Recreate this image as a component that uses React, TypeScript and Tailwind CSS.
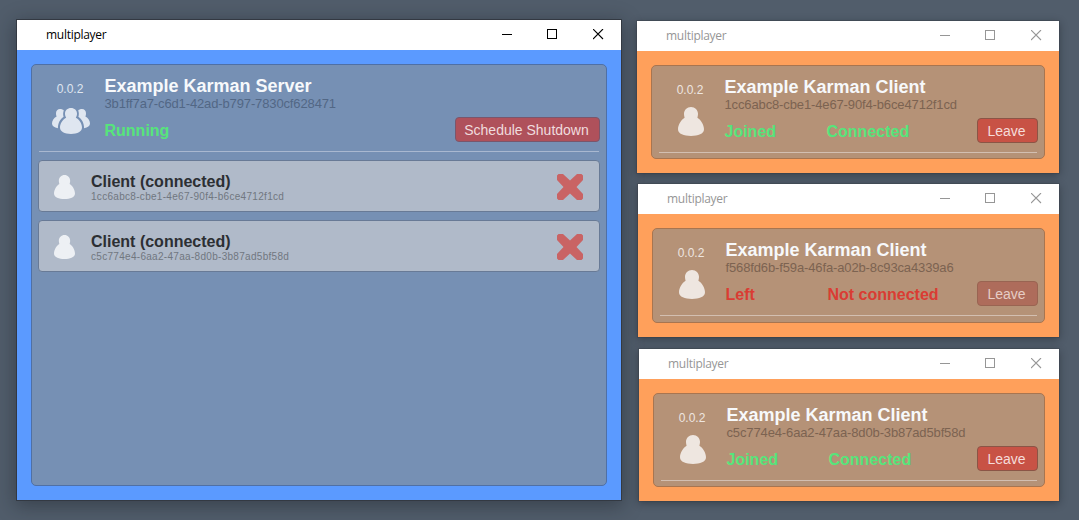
import React from "react";
import clsx from "clsx";

function PersonIcon({ className }: { className: string }) {
  return (
    <svg viewBox="0 0 26 29" className={className} fill="currentColor" preserveAspectRatio="none">
      <path d="M13 0C17 0 20 3 20 6.8C20 8.7 19.6 9.6 19.4 10.8C23 12.8 26 18 26 22.3C26 27 20 29 13 29S0 27 0 22.3C0 18 3 12.8 6.6 10.8C6.4 9.6 6 8.7 6 6.8C6 3 9 0 13 0Z" />
    </svg>
  );
}

function GroupIcon({ className }: { className: string }) {
  return (
    <svg viewBox="0 0 38 26" className={className} fill="currentColor">
      <path d="M19 0C22.5 0 25 2.4 25 5.6C25 7.3 24.6 8.6 23.8 9.8C27.6 11.6 30 15.8 30 19.6C30 23.8 25.5 26 19 26S8 23.8 8 19.6C8 15.8 10.4 11.6 14.2 9.8C13.4 8.6 13 7.3 13 5.6C13 2.4 15.5 0 19 0Z" />
      <path d="M8 1C9.7 1 11 1.5 11.8 2.5C11 4.5 10.9 6.8 11.6 8.8C8.3 11 6 15 5.9 20.3C2.3 19.6 0 18.2 0 15.6C0 12.6 1.8 9.8 4.6 8.4C4.1 7.4 4 6.3 4 5.2C4 2.7 5.7 1 8 1Z" />
      <path d="M30 1C28.3 1 27 1.5 26.2 2.5C27 4.5 27.1 6.8 26.4 8.8C29.7 11 32 15 32.1 20.3C35.7 19.6 38 18.2 38 15.6C38 12.6 36.2 9.8 33.4 8.4C33.9 7.4 34 6.3 34 5.2C34 2.7 32.3 1 30 1Z" />
    </svg>
  );
}

function CrossIcon() {
  return (
    <svg viewBox="0 0 26 26" className="h-[26px] w-[26px] fill-[#c96364]">
      <path d="M1.5 0H6L13 6.5L20 0H24.5L26 1.5V6L19.5 13L26 20V24.5L24.5 26H20L13 19.5L6 26H1.5L0 24.5V20L6.5 13L0 6V1.5Z" />
    </svg>
  );
}

function TitleBar({ active }: { active: boolean }) {
  return (
    <div className={clsx("flex h-[30px] shrink-0 items-center bg-white pl-[29px] pr-[17px]", active ? "text-black" : "text-[#969696]")}>
      <span className="flex-1 font-['Open_Sans',sans-serif] text-[12px] leading-[16px] tracking-[-0.28px]">multiplayer</span>
      <div className="flex gap-[35px] pb-px">
        <svg viewBox="0 0 11 11" className="h-[11px] w-[11px]" fill="currentColor" shapeRendering="crispEdges">
          <path d="M1 5H11V6H1Z" />
        </svg>
        <svg viewBox="0 0 11 11" className="h-[11px] w-[11px]" fill="none" stroke="currentColor" shapeRendering="crispEdges">
          <rect x=".5" y=".5" width="9" height="9" />
        </svg>
        <svg viewBox="0 0 11 11" className="h-[11px] w-[11px]" fill="none" stroke="currentColor">
          <path d="M0 0L10 10M10 0L0 10" strokeWidth="1.1" />
        </svg>
      </div>
    </div>
  );
}

type HeaderProps = {
  title: string;
  id: string;
  status: [string, string?];
  ok: boolean;
  action: string;
  actionClass: string;
  icon: React.ReactNode;
  server?: boolean;
};

function Header({ title, id, status, ok, action, actionClass, icon, server }: HeaderProps) {
  return (
    <div className="flex h-[86px] px-[6px]">
      <div className={clsx("flex w-[66.5px] shrink-0 flex-col items-center pr-[0.5px] pt-[17px]", server ? "text-[#dfe6f0]" : "text-[#eee6e0]")}>
        <span className="pr-[2px] text-[12px] leading-[15px]">0.0.2</span>
        <div className="mt-[9px] flex h-[29px] w-[38px] items-center justify-center">{icon}</div>
      </div>
      <div className="flex min-w-0 flex-1 flex-col pt-[11px]">
        <h1 className="text-[18px] leading-[20px] font-bold text-[#f7f9fb]">{title}</h1>
        <p className={clsx("text-[13px] leading-[16px] tracking-[-0.13px]", server ? "text-[#526785]" : "text-[#7c6351]")}>{id}</p>
        <div className="mt-[5px] flex h-[25px] items-center">
          <span className={clsx("flex flex-1 pt-[2px] text-[16px] leading-[20px] font-bold", ok ? "text-[#56e57b]" : "text-[#da3c33]")}>
            <span className="w-[102px]">{status[0]}</span>
            <span>{status[1]}</span>
          </span>
          <button className={clsx("h-[25px] rounded-[4px] border pr-[2px] pt-px text-[14px] leading-[22px]", actionClass)}>{action}</button>
        </div>
      </div>
    </div>
  );
}

function Divider({ className }: { className: string }) {
  return <div className={clsx("mx-[7px] h-[2px] shrink-0 border-t", className)} />;
}

function ClientRow({ id }: { id: string }) {
  return (
    <div className="flex h-[52px] items-center rounded-[4px] border border-[#687a96] bg-[#b0bac9] pl-[15px] pr-[16px] pt-[2px]">
      <PersonIcon className="h-[24px] w-[21px] text-[#edf0f4]" />
      <div className="ml-[16px] flex-1">
        <h2 className="text-[16px] leading-[18px] font-bold text-[#2c2f33]">Client (connected)</h2>
        <p className="text-[10px] leading-[11px] tracking-[0.3px] text-[#717780]">{id}</p>
      </div>
      <CrossIcon />
    </div>
  );
}

const clients = [
  { id: "1cc6abc8-cbe1-4e67-90f4-b6ce4712f1cd", joined: true, frame: "left-[637px] top-[21px] h-[152px] w-[422px]" },
  { id: "f568fd6b-f59a-46fa-a02b-8c93ca4339a6", joined: false, frame: "left-[638px] top-[184px] h-[153px] w-[421px]" },
  { id: "c5c774e4-6aa2-47aa-8d0b-3b87ad5bf58d", joined: true, frame: "left-[639px] top-[349px] h-[152px] w-[420px]" },
];

export default function App() {
  return (
    <main className="relative h-[520px] w-[1079px] overflow-hidden bg-[#515d6b] font-['Liberation_Sans',Arial,sans-serif]">
      <section className="absolute left-[17px] top-[20px] flex h-[480px] w-[604px] flex-col bg-[#5b9aff] shadow-[0_0_0_1px_#333942,0_4px_18px_2px_rgba(20,25,32,0.4)]">
        <TitleBar active />
        <div className="m-[14px] flex flex-1 flex-col rounded-[5px] border border-[#4f70a5] bg-[#7690b4]">
          <Header
            server
            title="Example Karman Server"
            id="3b1ff7a7-c6d1-42ad-b797-7830cf628471"
            status={["Running"]}
            ok
            action="Schedule Shutdown"
            actionClass="w-[145px] border-[#7a566c] bg-[#af515b] text-[#efdcde]"
            icon={<GroupIcon className="h-[26px] w-[38px]" />}
          />
          <Divider className="border-[#a9b8d0]" />
          <div className="mx-[6px] mt-[7px] flex flex-col gap-[8px]">
            <ClientRow id="1cc6abc8-cbe1-4e67-90f4-b6ce4712f1cd" />
            <ClientRow id="c5c774e4-6aa2-47aa-8d0b-3b87ad5bf58d" />
          </div>
        </div>
      </section>
      {clients.map((client) => (
        <section key={client.id} className={clsx("absolute flex flex-col bg-[#ffa05b] shadow-[0_0_0_1px_rgba(55,61,70,0.35),0_2px_8px_rgba(20,25,32,0.45)]", client.frame)}>
          <TitleBar active={false} />
          <div className="m-[14px] flex flex-1 flex-col rounded-[5px] border border-[#a87550] bg-[#b59277]">
            <Header
              title="Example Karman Client"
              id={client.id}
              status={client.joined ? ["Joined", "Connected"] : ["Left", "Not connected"]}
              ok={client.joined}
              action="Leave"
              actionClass={client.joined ? "w-[61px] border-[#8b5546] bg-[#c85245] text-[#f5dcda]" : "w-[61px] border-[#996452] bg-[#ae6c5b] text-[#e6ccc5]"}
              icon={<PersonIcon className="h-[29px] w-[26px]" />}
            />
            <Divider className="border-[#d3bfb1]" />
          </div>
        </section>
      ))}
    </main>
  );
}
